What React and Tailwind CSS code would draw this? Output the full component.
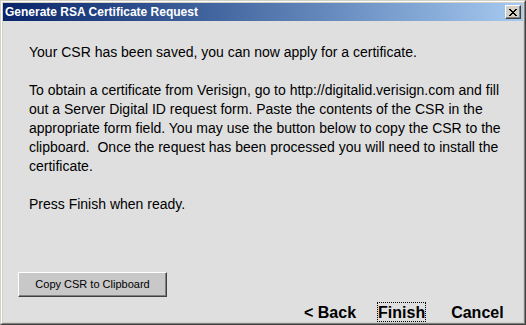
import React from 'react';

const lines = [
    'To obtain a certificate from Verisign, go to http://digitalid.verisign.com and fill',
    'out a Server Digital ID request form. Paste the contents of the CSR in the',
    'appropriate form field. You may use the button below to copy the CSR to the',
    'clipboard.  Once the request has been processed you will need to install the',
    'certificate.',
];

export default function App() {
    return (
        <div className="w-[526px] h-[325px] border border-t-[#d4d0c8] border-l-[#d4d0c8] border-b-[#404040] border-r-[#404040] font-['Liberation_Sans',Arial,sans-serif]">
            <div className="h-full border border-t-white border-l-white border-b-[#808080] border-r-[#808080]">
                <div className="h-full p-px bg-[#d4d0c8] flex flex-col">
                    {/* Title bar */}
                    <div className="h-[18px] flex items-center justify-between pl-[2px] pr-[2px] bg-gradient-to-r from-[#0a246a] to-[#a6caf0]">
                        <span className="text-white font-bold text-[12px] leading-none">Generate RSA Certificate Request</span>
                        <button className="w-[16px] h-[14px] bg-[#d4d0c8] border border-t-white border-l-white border-b-[#404040] border-r-[#404040] shadow-[inset_-1px_-1px_0_#808080] flex items-center justify-center">
                            <svg width="8" height="7" viewBox="0 0 8 7" shapeRendering="crispEdges">
                                <path d="M0 0h2v1h-2zM6 0h2v1h-2zM1 1h2v1h-2zM5 1h2v1h-2zM2 2h4v1h-4zM3 3h2v1h-2zM2 4h4v1h-4zM1 5h2v1h-2zM5 5h2v1h-2zM0 6h2v1h-2zM6 6h2v1h-2z" fill="#000" />
                            </svg>
                        </button>
                    </div>

                    {/* Body */}
                    <div className="flex-1 bg-[#dfdfdf] flex flex-col">
                        <div className="pt-[22px] pl-[26px] text-[14px] leading-[19px] text-black whitespace-pre">
                            <div>Your CSR has been saved, you can now apply for a certificate.</div>
                            <div>&nbsp;</div>
                            {lines.map(l => (
                                <div key={l}>{l}</div>
                            ))}
                            <div>&nbsp;</div>
                            <div>Press Finish when ready.</div>
                        </div>

                        <div className="mt-auto pl-[15px]">
                            <button className="w-[149px] h-[25px] bg-[#c8c8c8] border border-t-white border-l-white border-b-[#404040] border-r-[#404040] shadow-[inset_-1px_-1px_0_#808080] text-[11px] text-black leading-none">
                                Copy CSR to Clipboard
                            </button>
                        </div>

                        <div className="mt-[5px] h-[20px] flex items-start pl-[301px] text-[16px] font-bold text-black leading-[18px]">
                            <span className="pt-[2px]">&lt; Back</span>
                            <span className="ml-[21px] h-[20px] border border-dotted border-black pt-px">Finish</span>
                            <span className="ml-[25px] pt-[2px]">Cancel</span>
                        </div>
                    </div>
                </div>
            </div>
        </div>
    );
}
